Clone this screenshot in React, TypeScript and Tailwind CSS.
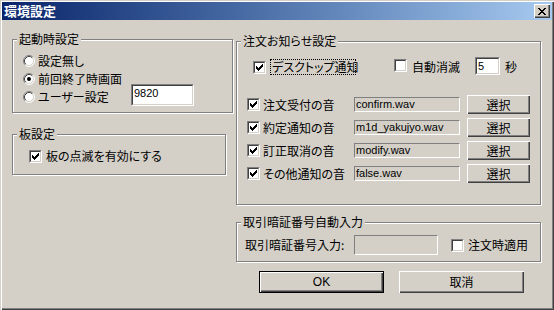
import React from "react";

function Check({ checked }: { checked: boolean }) {
  return (
    <div className="w-[13px] h-[13px] shrink-0 border border-t-[#808080] border-l-[#808080] border-b-white border-r-white">
      <div className="w-full h-full border border-t-[#404040] border-l-[#404040] border-b-[#d4d0c8] border-r-[#d4d0c8] bg-white">
        {checked && (
          <svg width="9" height="9" viewBox="0 0 9 9" className="block" shapeRendering="crispEdges">
            <path
              d="M1 3h1v3h-1z M2 4h1v3h-1z M3 5h1v3h-1z M4 4h1v3h-1z M5 3h1v3h-1z M6 2h1v3h-1z M7 1h1v3h-1z"
              fill="#000"
            />
          </svg>
        )}
      </div>
    </div>
  );
}

function Radio({ checked }: { checked: boolean }) {
  return (
    <svg width="12" height="12" viewBox="0 0 12 12" className="block shrink-0">
      <circle cx="6" cy="6" r="5" fill="#fff" />
      <path d="M2.11 9.89 A5.5 5.5 0 0 1 9.89 2.11" stroke="#808080" strokeWidth="1" fill="none" />
      <path d="M9.89 2.11 A5.5 5.5 0 0 1 2.11 9.89" stroke="#ffffff" strokeWidth="1" fill="none" />
      <path d="M2.82 9.18 A4.5 4.5 0 0 1 9.18 2.82" stroke="#404040" strokeWidth="1" fill="none" />
      <path d="M9.18 2.82 A4.5 4.5 0 0 1 2.82 9.18" stroke="#d4d0c8" strokeWidth="1" fill="none" />
      {checked && <circle cx="6" cy="6" r="2" fill="#000" />}
    </svg>
  );
}

function Group({
  title,
  className,
  children,
}: {
  title: string;
  className: string;
  children?: React.ReactNode;
}) {
  return (
    <div
      className={
        "relative border border-[#808080] shadow-[inset_1px_1px_0_#fff,1px_1px_0_#fff] " + className
      }
    >
      <span className="absolute left-[4px] top-[-8px] px-[2px] bg-[#d4d0c8] leading-[14px] whitespace-nowrap">
        {title}
      </span>
      {children}
    </div>
  );
}

function Button({ label, isDefault, className }: { label: string; isDefault?: boolean; className: string }) {
  const raised =
    "shadow-[inset_1px_1px_0_#fff,inset_-1px_-1px_0_#404040,inset_-2px_-2px_0_#808080]";
  if (isDefault) {
    return (
      <div className={"border border-black " + className}>
        <div className={"w-full h-full flex items-center justify-center bg-[#d4d0c8] " + raised}>
          <span className="font-['Liberation_Sans',sans-serif] text-[12px]">{label}</span>
        </div>
      </div>
    );
  }
  return (
    <div className={"flex items-center justify-center bg-[#d4d0c8] " + raised + " " + className}>
      <span>{label}</span>
    </div>
  );
}

function StaticField({ text, className }: { text?: string; className: string }) {
  return (
    <div
      className={
        "border border-t-[#808080] border-l-[#808080] border-b-white border-r-white bg-[#d4d0c8] pl-[1px] font-['Liberation_Sans',sans-serif] text-[11px] leading-[13px] overflow-hidden whitespace-nowrap " +
        className
      }
    >
      {text}
    </div>
  );
}

function SunkenInput({ text, className }: { text: string; className: string }) {
  return (
    <div
      className={
        "border border-t-[#808080] border-l-[#808080] border-b-white border-r-white " + className
      }
    >
      <div className="w-full h-full border border-t-[#404040] border-l-[#404040] border-b-[#d4d0c8] border-r-[#d4d0c8] bg-white pl-[1px] pt-[1px] font-['Liberation_Sans',sans-serif] text-[11px] leading-[13px]">
        {text}
      </div>
    </div>
  );
}

const sounds = [
  { label: "注文受付の音", file: "confirm.wav" },
  { label: "約定通知の音", file: "m1d_yakujyo.wav" },
  { label: "訂正取消の音", file: "modify.wav" },
  { label: "その他通知の音", file: "false.wav" },
];

export default function App() {
  return (
    <div className="w-[554px] h-[310px] bg-[#d4d0c8] p-[2px] shadow-[inset_1px_1px_0_#d4d0c8,inset_2px_2px_0_#fff,inset_-1px_-1px_0_#404040,inset_-2px_-2px_0_#808080] text-[12px] leading-[14px] text-black flex flex-col font-['Noto_Sans_CJK_JP',sans-serif] [font-feature-settings:'palt'] overflow-hidden">
      {/* Title bar */}
      <div className="h-[18px] shrink-0 bg-linear-to-r from-[#0a246a] to-[#a6caf0] flex items-center justify-between pl-[2px] pr-[2px]">
        <span className="text-white font-bold text-[13px] leading-[16px]">環境設定</span>
        <div className="w-[16px] h-[14px] bg-[#d4d0c8] flex items-center justify-center shadow-[inset_1px_1px_0_#fff,inset_-1px_-1px_0_#404040,inset_-2px_-2px_0_#808080]">
          <svg width="8" height="7" viewBox="0 0 8 7" shapeRendering="crispEdges" className="block">
            <path
              d="M0 0h2v1h-2z M6 0h2v1h-2z M1 1h2v1h-2z M5 1h2v1h-2z M2 2h4v1h-4z M3 3h2v1h-2z M2 4h4v1h-4z M1 5h2v1h-2z M5 5h2v1h-2z M0 6h2v1h-2z M6 6h2v1h-2z"
              fill="#000"
            />
          </svg>
        </div>
      </div>

      {/* Body */}
      <div className="flex flex-1 pl-[10px]">
        {/* Left column */}
        <div className="w-[221px] flex flex-col">
          <Group title="起動時設定" className="mt-[19px] h-[74px] w-[221px]">
            <div className="pt-[12px] pl-[10px] flex flex-col">
              <div className="h-[18px] flex items-center">
                <Radio checked={false} />
                <span className="ml-[3px]">設定無し</span>
              </div>
              <div className="h-[18px] flex items-center">
                <Radio checked={true} />
                <span className="ml-[3px]">前回終了時画面</span>
              </div>
              <div className="h-[18px] flex items-center">
                <Radio checked={false} />
                <span className="ml-[3px] w-[93px]">ユーザー設定</span>
                <SunkenInput text="9820" className="w-[63px] h-[22px] mb-[4px]" />
              </div>
            </div>
          </Group>

          <Group title="板設定" className="mt-[21px] h-[41px] w-[214px]">
            <div className="pt-[14px] pl-[16px] flex items-center">
              <Check checked={true} />
              <span className="ml-[4px]">板の点滅を有効にする</span>
            </div>
          </Group>
        </div>

        {/* Right column */}
        <div className="ml-[3px] w-[305px] flex flex-col">
          <Group title="注文お知らせ設定" className="mt-[21px] h-[164px] w-[305px]">
            <div className="pt-[15px] pl-[10px] flex flex-col">
              <div className="h-[20px] flex items-center ml-[6px]">
                <Check checked={true} />
                <span className="ml-[4px] border border-dotted border-black px-[1px] leading-[14px] w-[86px] whitespace-nowrap">
                  デスクトップ通知
                </span>
                <div className="ml-[38px] mb-[4px]">
                  <Check checked={false} />
                </div>
                <span className="ml-[5px] w-[48px] whitespace-nowrap">自動消滅</span>
                <SunkenInput text="5" className="ml-[15px] w-[25px] h-[18px] mb-[2px]" />
                <span className="ml-[5px]">秒</span>
              </div>
              <div className="mt-[16px] flex flex-col">
                {sounds.map((s) => (
                  <div key={s.file} className="h-[23px] flex items-center">
                    <Check checked={true} />
                    <span className="ml-[3px] w-[91px] whitespace-nowrap">{s.label}</span>
                    <StaticField text={s.file} className="w-[106px] h-[15px]" />
                    <Button label="選択" className="ml-[7px] w-[63px] h-[19px]" />
                  </div>
                ))}
              </div>
            </div>
          </Group>

          <Group title="取引暗証番号自動入力" className="mt-[17px] h-[40px] w-[305px]">
            <div className="h-full pt-[6px] pl-[8px] flex items-center">
              <span className="w-[109px] whitespace-nowrap">取引暗証番号入力:</span>
              <StaticField className="w-[84px] h-[20px]" />
              <div className="ml-[13px]">
                <Check checked={false} />
              </div>
              <span className="ml-[4px]">注文時適用</span>
            </div>
          </Group>

          <div className="mt-[9px] flex">
            <Button label="OK" isDefault className="ml-[23px] w-[125px] h-[22px]" />
            <Button label="取消" className="ml-[15px] w-[125px] h-[22px]" />
          </div>
        </div>
      </div>
    </div>
  );
}
